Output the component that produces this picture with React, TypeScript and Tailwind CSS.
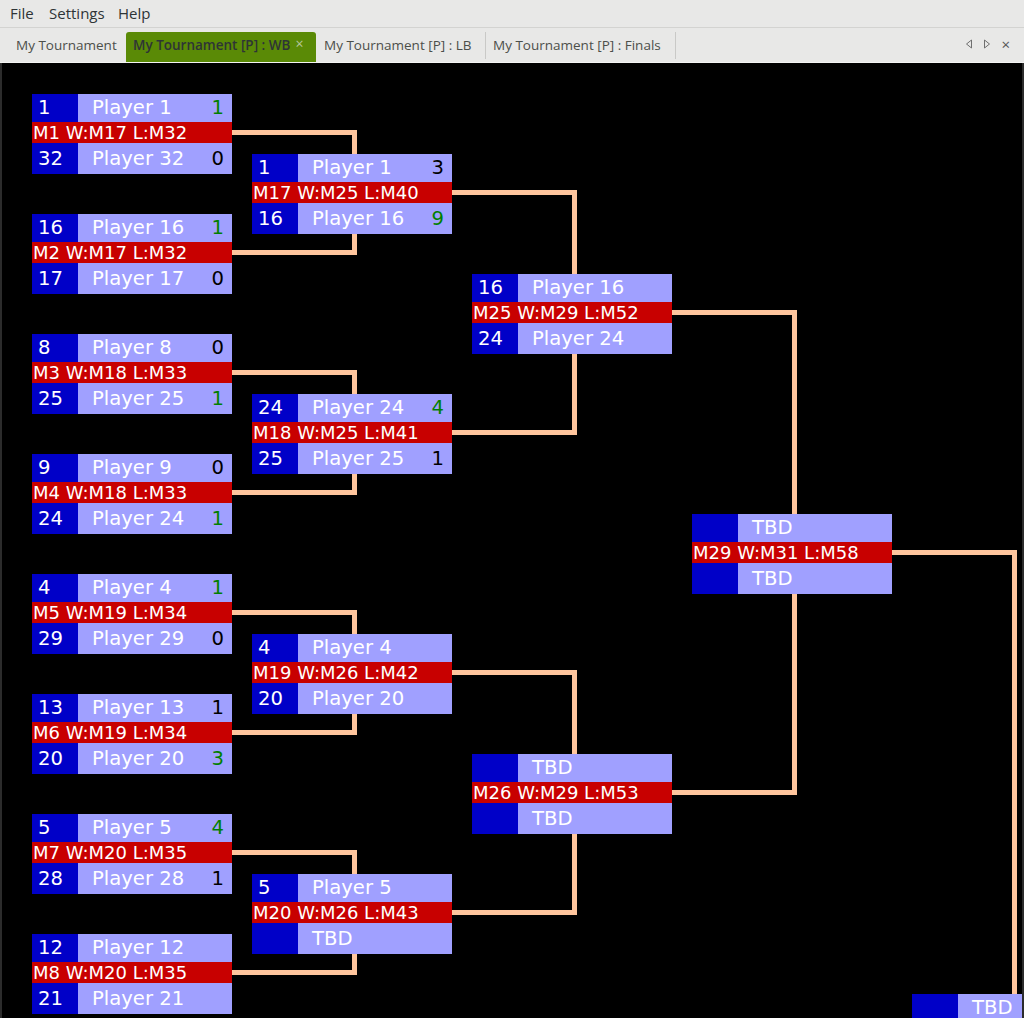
import React from "react";

type Row = { seed: string; name: string; score?: string; win?: boolean };
type Match = { top: Row; bottom: Row; label: string };

const R1: Match[] = [
  { top: { seed: "1", name: "Player 1", score: "1", win: true }, bottom: { seed: "32", name: "Player 32", score: "0" }, label: "M1 W:M17 L:M32" },
  { top: { seed: "16", name: "Player 16", score: "1", win: true }, bottom: { seed: "17", name: "Player 17", score: "0" }, label: "M2 W:M17 L:M32" },
  { top: { seed: "8", name: "Player 8", score: "0" }, bottom: { seed: "25", name: "Player 25", score: "1", win: true }, label: "M3 W:M18 L:M33" },
  { top: { seed: "9", name: "Player 9", score: "0" }, bottom: { seed: "24", name: "Player 24", score: "1", win: true }, label: "M4 W:M18 L:M33" },
  { top: { seed: "4", name: "Player 4", score: "1", win: true }, bottom: { seed: "29", name: "Player 29", score: "0" }, label: "M5 W:M19 L:M34" },
  { top: { seed: "13", name: "Player 13", score: "1" }, bottom: { seed: "20", name: "Player 20", score: "3", win: true }, label: "M6 W:M19 L:M34" },
  { top: { seed: "5", name: "Player 5", score: "4", win: true }, bottom: { seed: "28", name: "Player 28", score: "1" }, label: "M7 W:M20 L:M35" },
  { top: { seed: "12", name: "Player 12" }, bottom: { seed: "21", name: "Player 21" }, label: "M8 W:M20 L:M35" },
];

const R2: Match[] = [
  { top: { seed: "1", name: "Player 1", score: "3" }, bottom: { seed: "16", name: "Player 16", score: "9", win: true }, label: "M17 W:M25 L:M40" },
  { top: { seed: "24", name: "Player 24", score: "4", win: true }, bottom: { seed: "25", name: "Player 25", score: "1" }, label: "M18 W:M25 L:M41" },
  { top: { seed: "4", name: "Player 4" }, bottom: { seed: "20", name: "Player 20" }, label: "M19 W:M26 L:M42" },
  { top: { seed: "5", name: "Player 5" }, bottom: { seed: "", name: "TBD" }, label: "M20 W:M26 L:M43" },
];

const R3: Match[] = [
  { top: { seed: "16", name: "Player 16" }, bottom: { seed: "24", name: "Player 24" }, label: "M25 W:M29 L:M52" },
  { top: { seed: "", name: "TBD" }, bottom: { seed: "", name: "TBD" }, label: "M26 W:M29 L:M53" },
];

const R4: Match[] = [
  { top: { seed: "", name: "TBD" }, bottom: { seed: "", name: "TBD" }, label: "M29 W:M31 L:M58" },
];

const R5: Match[] = [
  { top: { seed: "", name: "TBD" }, bottom: { seed: "", name: "TBD" }, label: "M31 W:M32 L:M60" },
];

function PlayerRow({ row, h }: { row: Row; h: string }) {
  return (
    <div className={`flex ${h} text-[19.6px] leading-none`}>
      <div className="w-[46px] shrink-0 bg-[#0000c8] text-white flex items-center pl-[6px]">{row.seed}</div>
      <div className="flex-1 bg-[#a0a0ff] text-white flex items-center pl-[14px] whitespace-nowrap">{row.name}</div>
      <div className={`bg-[#a0a0ff] flex items-center pr-[8px] ${row.win ? "text-[#007f00]" : "text-black"}`}>{row.score ?? ""}</div>
    </div>
  );
}

function MatchBox({ m }: { m: Match }) {
  return (
    <div className="relative z-10 w-[200px] h-[80px] shrink-0 flex flex-col">
      <PlayerRow row={m.top} h="h-[28px]" />
      <div className="h-[21px] bg-[#c80000] text-white text-[18px] leading-none flex items-center pl-[1px] whitespace-nowrap">{m.label}</div>
      <PlayerRow row={m.bottom} h="h-[31px]" />
    </div>
  );
}

function Column({ matches, pt, gap }: { matches: Match[]; pt: string; gap: string }) {
  return (
    <div className={`w-[200px] shrink-0 flex flex-col ${pt} ${gap}`}>
      {matches.map((m, i) => (
        <MatchBox key={i} m={m} />
      ))}
    </div>
  );
}

function Connectors() {
  const paths: string[] = [];
  for (let k = 0; k < 4; k++) {
    const y1 = 69.5 + 240 * k;
    paths.push(`M230 ${y1} H352.5 V${y1 + 120} H230`);
  }
  for (let k = 0; k < 2; k++) {
    const y1 = 129.5 + 480 * k;
    paths.push(`M450 ${y1} H572.5 V${y1 + 240} H450`);
  }
  paths.push(`M670 249.5 H792.5 V729.5 H670`);
  paths.push(`M890 489.5 H1012.5 V935`);
  return (
    <svg className="absolute inset-0 z-0" width="1020" height="952" viewBox="0 0 1020 952">
      {paths.map((d, i) => (
        <path key={i} d={d} fill="none" stroke="#ffc59d" strokeWidth="5" strokeLinejoin="miter" strokeLinecap="butt" />
      ))}
    </svg>
  );
}

function Arrow({ dir }: { dir: "l" | "r" }) {
  return (
    <svg width="8" height="10" viewBox="0 0 8 10">
      {dir === "l" ? (
        <path d="M6.5 1 L1.5 5 L6.5 9 Z" fill="none" stroke="#6f6f6f" strokeWidth="1" />
      ) : (
        <path d="M1.5 1 L6.5 5 L1.5 9 Z" fill="none" stroke="#6f6f6f" strokeWidth="1" />
      )}
    </svg>
  );
}

export default function App() {
  const ui = { fontFamily: '"Open Sans", "Noto Sans", sans-serif' };
  return (
    <div className="w-[1024px] h-[1018px] flex flex-col overflow-hidden bg-[#e8e8e7]" style={ui}>
      {/* Menu bar */}
      <div className="h-[28px] shrink-0 flex items-center pl-[10px] text-[15px] text-[#2e3436] border-b border-[#d3d3d1]">
        <span className="w-[39px]">File</span>
        <span className="w-[69px]">Settings</span>
        <span>Help</span>
      </div>
      {/* Tab bar */}
      <div className="h-[35px] shrink-0 flex items-end text-[13.5px] text-[#4c4f4a] border-b border-[#f4f4f3] relative">
        <div className="w-[6px]" />
        <div className="w-[120px] h-[30px] flex items-center pl-[10px] pb-[3px] whitespace-nowrap">My Tournament</div>
        <div className="w-[190px] h-[30px] flex items-center pl-[7px] pb-[3px] bg-[#5a8a06] rounded-t-[3px] text-[#2e3436] whitespace-nowrap">
          <span className="font-semibold">My Tournament [P] : WB</span>
          <span className="ml-[5px] text-[#b7c79c] text-[14px] -mt-[4px]">×</span>
        </div>
        <div className="w-[169px] h-[30px] flex items-center pl-[8px] pb-[3px] whitespace-nowrap">My Tournament [P] : LB</div>
        <div className="w-px h-[27px] mb-[3px] bg-[#c9c9c7]" />
        <div className="w-[189px] h-[30px] flex items-center pl-[7px] pb-[3px] whitespace-nowrap">My Tournament [P] : Finals</div>
        <div className="w-px h-[27px] mb-[3px] bg-[#c9c9c7]" />
        <div className="flex-1" />
        <div className="h-[30px] flex items-center gap-[10px] pr-[14px] pb-[6px]">
          <Arrow dir="l" />
          <Arrow dir="r" />
          <span className="text-[#555] text-[15px] leading-none">×</span>
        </div>
      </div>
      {/* Canvas */}
      <div className="flex-1 flex bg-[#2c2c2c] px-[2px] pb-[3px]">
        <div className="relative flex-1 bg-black overflow-hidden" style={{ fontFamily: '"DejaVu Sans", sans-serif' }}>
          <Connectors />
          <div className="relative flex gap-[20px] pl-[30px]">
            <Column matches={R1} pt="pt-[31px]" gap="gap-[40px]" />
            <Column matches={R2} pt="pt-[91px]" gap="gap-[160px]" />
            <Column matches={R3} pt="pt-[211px]" gap="gap-[400px]" />
            <Column matches={R4} pt="pt-[451px]" gap="gap-[40px]" />
            <Column matches={R5} pt="pt-[931px]" gap="gap-[40px]" />
          </div>
        </div>
      </div>
    </div>
  );
}
